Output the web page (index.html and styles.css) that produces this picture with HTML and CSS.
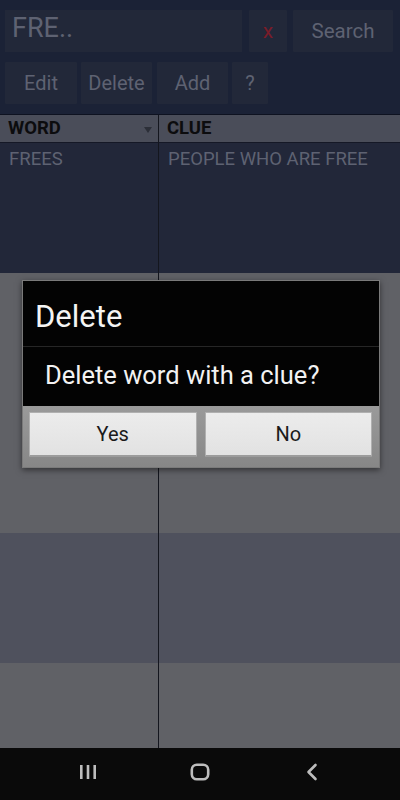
FILE: index.html
```html
<!DOCTYPE html>
<html lang="en">

<head>
  <meta charset="UTF-8">
  <meta name="viewport" content="width=device-width, initial-scale=1.0">
  <title>Crossword Dictionary</title>
  <link rel="stylesheet" href="styles.css">
</head>

<body>

  <div id="screen">
    <div class="toolbar">
      <div class="search-row">
        <div class="search-input">FRE..</div>
        <button class="tool-btn clear-btn">x</button>
        <button class="tool-btn search-btn">Search</button>
      </div>
      <div class="action-row">
        <button class="tool-btn edit-btn">Edit</button>
        <button class="tool-btn delete-btn">Delete</button>
        <button class="tool-btn add-btn">Add</button>
        <button class="tool-btn help-btn">?</button>
      </div>
    </div>

    <!-- word list -->
    <div class="table">
      <div class="head-cell word-col">WORD<span class="sort-arrow"></span></div>
      <div class="head-cell">CLUE</div>

      <div class="cell word-col row-selected">FREES</div>
      <div class="cell row-selected">PEOPLE WHO ARE FREE</div>
      <div class="cell word-col row-gray"></div>
      <div class="cell row-gray"></div>
      <div class="cell word-col row-gray"></div>
      <div class="cell row-gray"></div>
      <div class="cell word-col row-blue"></div>
      <div class="cell row-blue"></div>
      <div class="cell word-col row-gray"></div>
      <div class="cell row-gray"></div>
    </div>

    <div class="navbar">
      <div class="nav-slot">
        <svg width="18" height="16" viewBox="0 0 18 16">
          <rect x="1" y="1" width="2.6" height="14" fill="#bdbdbd" />
          <rect x="7.7" y="1" width="2.6" height="14" fill="#bdbdbd" />
          <rect x="14.4" y="1" width="2.6" height="14" fill="#bdbdbd" />
        </svg>
      </div>
      <div class="nav-slot">
        <svg width="20" height="18" viewBox="0 0 20 18">
          <rect x="1.8" y="1.8" width="16.4" height="14.4" rx="5" fill="none" stroke="#bdbdbd" stroke-width="2.6" />
        </svg>
      </div>
      <div class="nav-slot">
        <svg width="14" height="18" viewBox="0 0 14 18">
          <path d="M10.5 2 L3.5 9 L10.5 16" fill="none" stroke="#bdbdbd" stroke-width="2.6" stroke-linecap="round" stroke-linejoin="round" />
        </svg>
      </div>
    </div>

    <!-- delete confirmation -->
    <div class="dialog">
      <div class="dialog-title">Delete</div>
      <div class="dialog-message">Delete word with a clue?</div>
      <div class="dialog-buttons">
        <button class="dialog-btn">Yes</button>
        <button class="dialog-btn">No</button>
      </div>
    </div>
  </div>

</body>

</html>
```

FILE: styles.css
```css
body {
  margin: 0;
  font-family: Roboto, "Noto Sans", sans-serif;
  background-color: #0a0a0a;
}

#screen {
  position: relative;
  width: 400px;
  height: 800px;
  display: flex;
  flex-direction: column;
  overflow: hidden;
}

.toolbar {
  background-color: #1b2236;
  padding: 10px 7px 11px 5px;
}

.search-row,
.action-row {
  display: flex;
  height: 42px;
}

.action-row {
  margin-top: 10px;
  gap: 4px;
}

.search-input {
  width: 237px;
  background-color: #222839;
  color: #5e6272;
  font-size: 27px;
  line-height: 36px;
  padding-left: 7px;
  box-sizing: border-box;
}

.tool-btn {
  margin: 0;
  padding: 0;
  border: none;
  border-radius: 1px;
  background-color: #222839;
  color: #5e6272;
  font-family: inherit;
  font-size: 20px;
}

.search-btn {
  font-size: 20.5px;
}

.clear-btn {
  width: 38px;
  margin-left: 7px;
  color: #7a1c29;
  font-size: 21px;
  line-height: 36px;
}

.search-btn {
  width: 100px;
  margin-left: 6px;
}

.edit-btn {
  width: 72px;
}

.delete-btn {
  width: 71px;
}

.add-btn {
  width: 71px;
  margin-left: 1px;
}

.help-btn {
  width: 36px;
}

.table {
  flex: 1;
  display: grid;
  grid-template-columns: 159px 1fr;
  grid-template-rows: 28px repeat(5, 130px);
  overflow: hidden;
  border-top: 1px solid #0e1220;
  margin-top: -1px;
}

.head-cell {
  position: relative;
  background-color: #4a4d59;
  color: #0c0c0e;
  font-weight: bold;
  font-size: 18.5px;
  line-height: 27px;
  padding-left: 8px;
  border-bottom: 1px solid #151826;
}

.word-col {
  border-right: 1px solid #14161e;
}

.sort-arrow {
  position: absolute;
  right: 6px;
  top: 12px;
  border-left: 4px solid transparent;
  border-right: 4px solid transparent;
  border-top: 6px solid #2c2f38;
}

.cell {
  font-size: 18.5px;
  color: #5e6272;
  padding: 5px 0 0 9px;
}

.row-selected {
  background-color: #222739;
}

.row-gray {
  background-color: #606166;
}

.row-blue {
  background-color: #4f515d;
}

.navbar {
  height: 52px;
  flex-shrink: 0;
  box-sizing: border-box;
  background-color: #0a0a0a;
  display: flex;
  align-items: center;
  padding: 0 32px 4px 32px;
}

.nav-slot {
  flex: 1;
  display: flex;
  justify-content: center;
}

.dialog {
  position: absolute;
  left: 22px;
  top: 280px;
  width: 358px;
  border: 1px solid #7a7a7a;
  box-sizing: border-box;
  background-color: #030303;
  box-shadow: 0 2px 6px rgba(0, 0, 0, 0.5);
}

.dialog-title {
  height: 65px;
  color: #f4f4f4;
  font-size: 31px;
  line-height: 72px;
  padding-left: 12px;
  border-bottom: 1px solid #262626;
}

.dialog-message {
  height: 59px;
  color: #f2f2f2;
  font-size: 25.5px;
  line-height: 56px;
  padding-left: 22px;
}

.dialog-buttons {
  display: flex;
  gap: 8px;
  padding: 6px 7px 10px 6px;
  background: linear-gradient(#9a9a9a, #878787);
}

.dialog-btn {
  flex: 1;
  height: 45px;
  margin: 0;
  border: 1px solid #b0b0b0;
  border-bottom: 2px solid #9c9c9c;
  border-radius: 1px;
  background: linear-gradient(#ececec, #e2e2e2);
  color: #1a1a1a;
  font-family: inherit;
  font-size: 20px;
}
```
